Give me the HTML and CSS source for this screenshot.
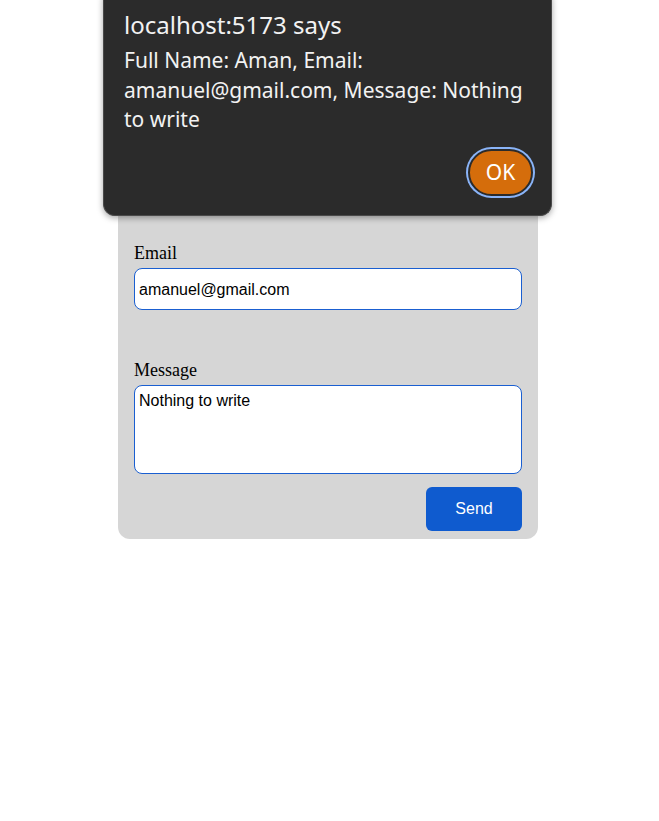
FILE: index.html
```html
<!DOCTYPE html>
<html>
<head>
<meta charset="utf-8">
<link rel="stylesheet" href="styles.css">
</head>
<body>
<div class="page">
  <form class="card">
    <div class="group covered">
      <label class="label">Full Name</label>
      <input class="field" type="text" value="Aman">
    </div>
    <div class="group">
      <label class="label">Email</label>
      <input class="field" type="text" value="amanuel@gmail.com">
    </div>
    <div class="group last">
      <label class="label">Message</label>
      <textarea class="area">Nothing to write</textarea>
    </div>
    <div class="actions">
      <button class="send" type="button">Send</button>
    </div>
  </form>
  <div class="dialog">
    <div class="d-title">localhost:5173 says</div>
    <div class="d-msg">Full Name: Aman, Email: amanuel@gmail.com, Message: Nothing to write</div>
    <div class="d-actions">
      <button class="ok" type="button">OK</button>
    </div>
  </div>
</div>
</body>
</html>
```
FILE: styles.css
```css
html, body {
  margin: 0;
  padding: 0;
  background: #ffffff;
}
.page {
  position: relative;
  width: 659px;
  height: 821px;
  overflow: hidden;
}
.card {
  width: 420px;
  box-sizing: border-box;
  margin: 110px 0 0 118px;
  padding: 16px 16px 8px;
  background: #d6d6d6;
  border-radius: 12px;
  display: flex;
  flex-direction: column;
}
.group {
  display: flex;
  flex-direction: column;
  margin-bottom: 50px;
}
.group.covered {
  visibility: hidden;
}
.group.last {
  margin-bottom: 13px;
}
.label {
  font-family: "Liberation Serif", "Times New Roman", serif;
  font-size: 18px;
  line-height: 21px;
  color: #000;
  margin-bottom: 4px;
}
.field, .area {
  box-sizing: border-box;
  width: 388px;
  border: 1px solid #1a5fd1;
  border-radius: 8px;
  background: #fff;
  font-family: "Liberation Sans", Arial, sans-serif;
  font-size: 16px;
  color: #000;
  padding: 1px 4px 0;
  margin: 0;
  outline: none;
}
.field {
  height: 42px;
}
.area {
  height: 89px;
  padding: 6px 4px 4px;
  resize: none;
  line-height: 18px;
}
.actions {
  display: flex;
  justify-content: flex-end;
}
.send {
  width: 96px;
  height: 44px;
  border: none;
  border-radius: 6px;
  background: #0f5bcf;
  color: #fff;
  font-family: "Liberation Sans", Arial, sans-serif;
  font-size: 16px;
}
.dialog {
  position: absolute;
  left: 103px;
  top: -12px;
  width: 449px;
  height: 228px;
  box-sizing: border-box;
  background: #2b2b2b;
  border: 1px solid #4a4a4a;
  border-top: none;
  border-radius: 12px;
  box-shadow: 0 2px 6px rgba(0,0,0,0.35);
  padding: 22px 20px 0 20px;
  color: #f2f2f2;
  font-family: "Noto Sans", "Open Sans", sans-serif;
}
.d-title {
  font-size: 24px;
  line-height: 30px;
  margin-bottom: 6px;
}
.d-msg {
  font-size: 21px;
  line-height: 29.5px;
}
.d-actions {
  display: flex;
  justify-content: flex-end;
  margin-top: 14px;
}
.ok {
  width: 65px;
  height: 47px;
  border-radius: 24px;
  background: #d56d0b;
  border: 2px solid #2b2b2b;
  box-shadow: 0 0 0 2px #8ab4f8;
  color: #fff;
  font-family: "Noto Sans", "Open Sans", sans-serif;
  font-size: 21px;
  padding: 0;
  margin-right: -2px;
}
```
